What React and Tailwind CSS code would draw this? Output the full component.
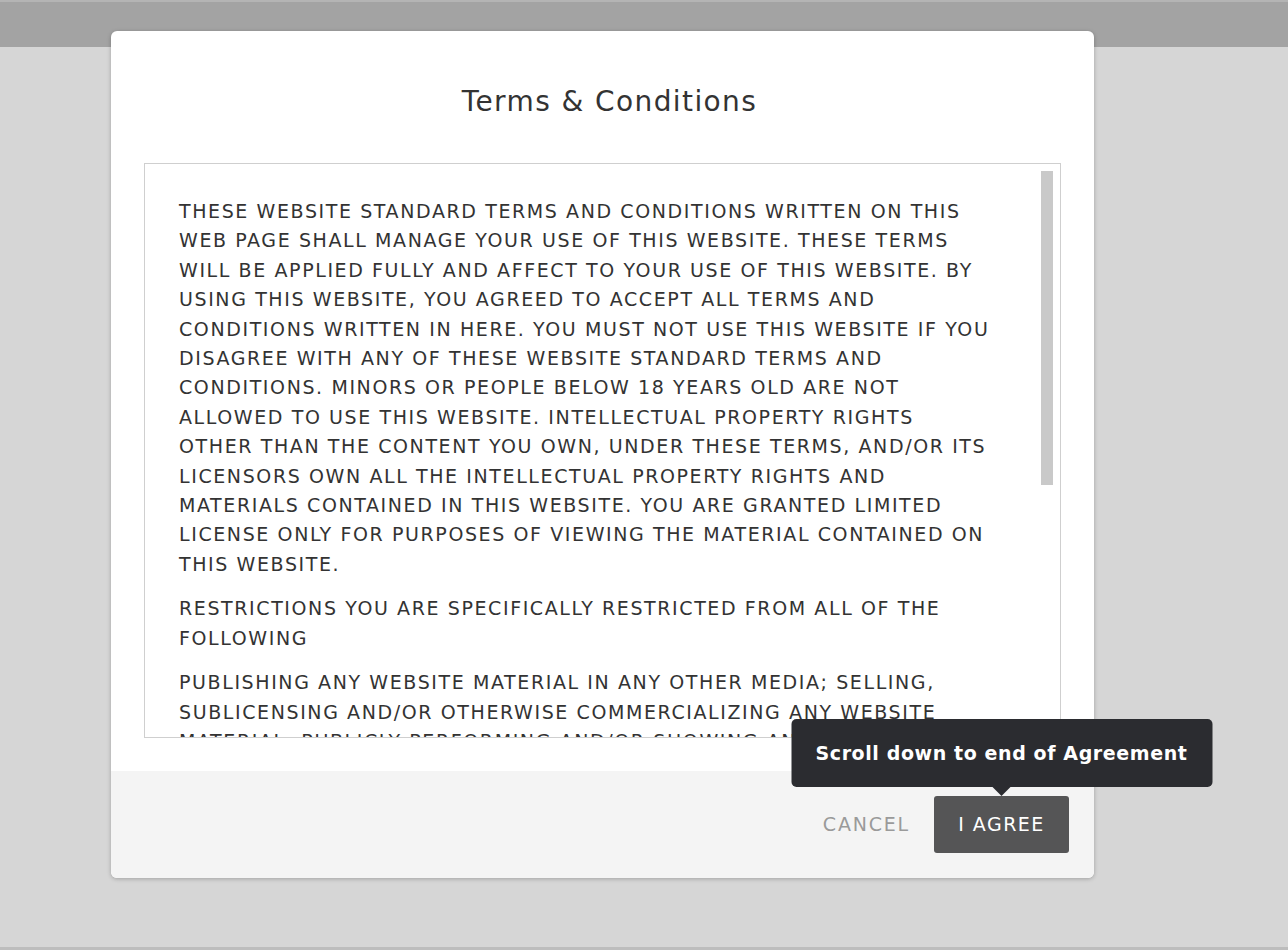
import React from 'react';

const FONT = { fontFamily: '"DejaVu Sans", "Open Sans", sans-serif' };

const paragraphs = [
  [
    'THESE WEBSITE STANDARD TERMS AND CONDITIONS WRITTEN ON THIS',
    'WEB PAGE SHALL MANAGE YOUR USE OF THIS WEBSITE. THESE TERMS',
    'WILL BE APPLIED FULLY AND AFFECT TO YOUR USE OF THIS WEBSITE. BY',
    'USING THIS WEBSITE, YOU AGREED TO ACCEPT ALL TERMS AND',
    'CONDITIONS WRITTEN IN HERE. YOU MUST NOT USE THIS WEBSITE IF YOU',
    'DISAGREE WITH ANY OF THESE WEBSITE STANDARD TERMS AND',
    'CONDITIONS. MINORS OR PEOPLE BELOW 18 YEARS OLD ARE NOT',
    'ALLOWED TO USE THIS WEBSITE. INTELLECTUAL PROPERTY RIGHTS',
    'OTHER THAN THE CONTENT YOU OWN, UNDER THESE TERMS, AND/OR ITS',
    'LICENSORS OWN ALL THE INTELLECTUAL PROPERTY RIGHTS AND',
    'MATERIALS CONTAINED IN THIS WEBSITE. YOU ARE GRANTED LIMITED',
    'LICENSE ONLY FOR PURPOSES OF VIEWING THE MATERIAL CONTAINED ON',
    'THIS WEBSITE.',
  ],
  ['RESTRICTIONS YOU ARE SPECIFICALLY RESTRICTED FROM ALL OF THE', 'FOLLOWING'],
  [
    'PUBLISHING ANY WEBSITE MATERIAL IN ANY OTHER MEDIA; SELLING,',
    'SUBLICENSING AND/OR OTHERWISE COMMERCIALIZING ANY WEBSITE',
    'MATERIAL; PUBLICLY PERFORMING AND/OR SHOWING ANY WEBSITE',
    'MATERIAL; USING THIS WEBSITE IN ANY WAY THAT IS OR MAY BE',
    'DAMAGING TO THIS WEBSITE.',
  ],
];

const App = () => {
  return (
    <div className="relative w-full h-[950px] bg-[#d6d6d6] overflow-hidden" style={FONT}>
      {/* page chrome behind the modal */}
      <div className="h-[47px] bg-[#a3a3a3] border-t-2 border-[#b4b4b4]" />
      <div className="absolute bottom-0 left-0 right-0 h-[3px] bg-[#bdbdbd]" />

      {/* Modal */}
      <div className="absolute left-[111px] top-[31px] w-[983px] h-[847px] bg-white rounded-[6px] shadow-[0_1px_4px_rgba(0,0,0,0.25)] flex flex-col">
        <div className="px-[33px] pt-[52px]">
          <h2 className="pl-[14px] text-center text-[28px] leading-[38px] tracking-[1.4px] text-[#333]">Terms &amp; Conditions</h2>

          <div className="relative mt-[42px] h-[575px] border border-[#cfcfcf] overflow-hidden">
            <div className="pl-[34px] pt-[33px] text-[19px] leading-[29.4px] tracking-[1.6px] text-[#333] space-y-[15px]">
              {paragraphs.map((lines, i) => (
                <p key={i}>
                  {lines.map((line, j) => (
                    <span key={j} className="block whitespace-nowrap">{line}</span>
                  ))}
                </p>
              ))}
            </div>
            {/* scrollbar thumb */}
            <div className="absolute right-[7px] top-[7px] w-[12px] h-[314px] bg-[#c9c9c9]" />
          </div>
        </div>

        <div className="mt-auto h-[107px] bg-[#f4f4f4] rounded-b-[6px] flex items-center justify-end gap-[24px] pr-[25px]">
          <button className="text-[19px] text-[#9a9a9a] tracking-[1.8px]">CANCEL</button>
          <div className="relative">
            <button className="w-[135px] h-[57px] bg-[#555556] rounded-[3px] text-white text-[19px] tracking-[1.5px]">I AGREE</button>
            {/* tooltip */}
            <div className="absolute left-1/2 -translate-x-1/2 bottom-[66px] w-[421px] h-[68px] bg-[#2b2c30] rounded-[5px] flex items-center justify-center text-white text-[19px] font-bold tracking-[0.6px]">
              Scroll down to end of Agreement
              <div className="absolute left-1/2 -translate-x-1/2 top-full w-0 h-0 border-l-[9px] border-r-[9px] border-t-[9px] border-l-transparent border-r-transparent border-t-[#2b2c30]" />
            </div>
          </div>
        </div>
      </div>
    </div>
  );
};

export default App;
